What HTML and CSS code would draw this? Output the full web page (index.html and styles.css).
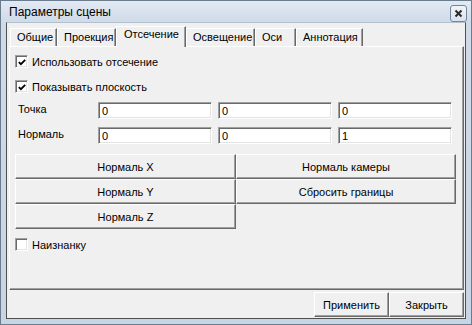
FILE: index.html
```html
<!DOCTYPE html>
<html lang="ru">
<head>
    <meta charset="UTF-8">
    <title>Параметры сцены</title>
    <link rel="stylesheet" href="styles.css">
</head>
<body>
    <div class="window">
        <div class="titlebar">
            <span class="title">Параметры сцены</span>
            <span class="close">
                <svg width="9" height="9" viewBox="0 0 9 9"><path d="M1.5 1.5 L7.5 7.5 M7.5 1.5 L1.5 7.5" stroke="#2b2b2b" stroke-width="2" fill="none"/></svg>
            </span>
        </div>
        <div class="client">
            <div class="tabs">
                <div class="tab" style="width:47px">Общие</div>
                <div class="tab" style="width:59px">Проекция</div>
                <div class="tab active" style="width:70px">Отсечение</div>
                <div class="tab" style="width:69px">Освещение</div>
                <div class="tab" style="width:41px">Оси</div>
                <div class="tab" style="width:67px">Аннотация</div>
            </div>
            <div class="panel">
                <label class="check">
                    <span class="box"><svg width="11" height="11" viewBox="0 0 11 11"><path d="M2 5 L4.3 7.3 L9 2.6" stroke="#000" stroke-width="2" fill="none"/></svg></span>
                    Использовать отсечение
                </label>
                <label class="check second">
                    <span class="box"><svg width="11" height="11" viewBox="0 0 11 11"><path d="M2 5 L4.3 7.3 L9 2.6" stroke="#000" stroke-width="2" fill="none"/></svg></span>
                    Показывать плоскость
                </label>
                <div class="fields">
                    <span class="lbl">Точка</span>
                    <div class="input">0</div>
                    <div class="input">0</div>
                    <div class="input">0</div>
                    <span class="lbl">Нормаль</span>
                    <div class="input">0</div>
                    <div class="input">0</div>
                    <div class="input">1</div>
                </div>
                <div class="btn-grid">
                    <button class="btn">Нормаль X</button>
                    <button class="btn">Нормаль камеры</button>
                    <button class="btn">Нормаль Y</button>
                    <button class="btn">Сбросить границы</button>
                    <button class="btn">Нормаль Z</button>
                </div>
                <label class="check last">
                    <span class="box"></span>
                    Наизнанку
                </label>
            </div>
            <div class="footer">
                <button class="btn">Применить</button>
                <button class="btn">Закрыть</button>
            </div>
        </div>
    </div>
</body>
</html>
```

FILE: styles.css
```css
*{
    box-sizing: border-box;
}
body{
    margin: 0;
    font-family: "Liberation Sans", Arial, sans-serif;
    font-size: 11px;
    color: #000;
}
.window{
    width: 472px;
    height: 325px;
    border: 1px solid #6a7c8e;
    background: linear-gradient(#e2eaf3, #cfdbe8 21px, #c7d5e4);
    padding: 0 5px 5px;
    display: flex;
    flex-direction: column;
}
.titlebar{
    height: 21px;
    display: flex;
    align-items: center;
    justify-content: space-between;
    padding-left: 3px;
}
.title{
    font-size: 12px;
    margin-top: 1px;
}
.close{
    width: 17px;
    height: 17px;
    margin-top: 4px;
    margin-right: -1px;
    border: 1px solid #74869a;
    border-radius: 3px;
    background: linear-gradient(#f1f5f9, #d9e3ee);
    display: flex;
    align-items: center;
    justify-content: center;
}
.client{
    flex: 1;
    background-color: #f0f0f0;
    border: 1px solid #4f4f4f;
    border-top-color: #b3c1cf;
    padding: 3px 1px 0 2px;
    display: flex;
    flex-direction: column;
}
.tabs{
    display: flex;
    align-items: flex-end;
    height: 20px;
    padding-left: 1px;
    position: relative;
    z-index: 1;
}
.tab{
    height: 18px;
    padding: 2px 0 0 6px;
    border-top: 1px solid #fff;
    border-left: 1px solid #fff;
    border-right: 1px solid #696969;
    box-shadow: inset -1px 0 #a0a0a0;
    white-space: nowrap;
    background-color: #f0f0f0;
}
.tab.active{
    height: 21px;
    margin-bottom: -1px;
    padding-top: 1px;
    padding-left: 7px;
}
.panel{
    height: 244px;
    border-top: 1px solid #fff;
    border-left: 1px solid #fff;
    border-right: 1px solid #696969;
    border-bottom: 1px solid #696969;
    box-shadow: inset -1px -1px #a0a0a0;
    padding: 8px 6px 0 5px;
}
.check{
    display: flex;
    align-items: center;
    gap: 4px;
    height: 13px;
}
.check.second{
    margin-top: 12px;
}
.check.last{
    margin-top: 9px;
}
.box{
    width: 13px;
    height: 13px;
    background-color: #fff;
    border-top: 1px solid #a0a0a0;
    border-left: 1px solid #a0a0a0;
    border-right: 1px solid #fff;
    border-bottom: 1px solid #fff;
    box-shadow: inset 1px 1px #696969, inset -1px -1px #e3e3e3;
    display: flex;
    align-items: center;
    justify-content: center;
}
.box svg{
    margin: 1px 0 0 1px;
}
.fields{
    display: grid;
    grid-template-columns: 77px 114px 114px 114px;
    grid-auto-rows: 17px;
    column-gap: 6px;
    row-gap: 8px;
    margin-top: 9px;
    align-items: center;
}
.lbl{
    padding: 0 0 3px 3px;
}
.input{
    height: 17px;
    background-color: #fff;
    border-top: 1px solid #a0a0a0;
    border-left: 1px solid #a0a0a0;
    border-right: 1px solid #fff;
    border-bottom: 1px solid #fff;
    box-shadow: inset 1px 1px #696969, inset -1px -1px #e3e3e3;
    padding: 2px 0 0 3px;
}
.btn-grid{
    display: grid;
    grid-template-columns: 221px 220px;
    grid-auto-rows: 25px;
    margin-top: 10px;
}
.btn{
    font-family: inherit;
    font-size: 11px;
    color: #000;
    background-color: #f0f0f0;
    border-top: 1px solid #fff;
    border-left: 1px solid #fff;
    border-right: 1px solid #696969;
    border-bottom: 1px solid #696969;
    box-shadow: inset -1px -1px #a0a0a0;
    padding: 0;
    margin: 0;
}
.footer{
    display: flex;
    justify-content: flex-end;
    padding-top: 2px;
}
.footer .btn{
    width: 75px;
    height: 25px;
}
```
